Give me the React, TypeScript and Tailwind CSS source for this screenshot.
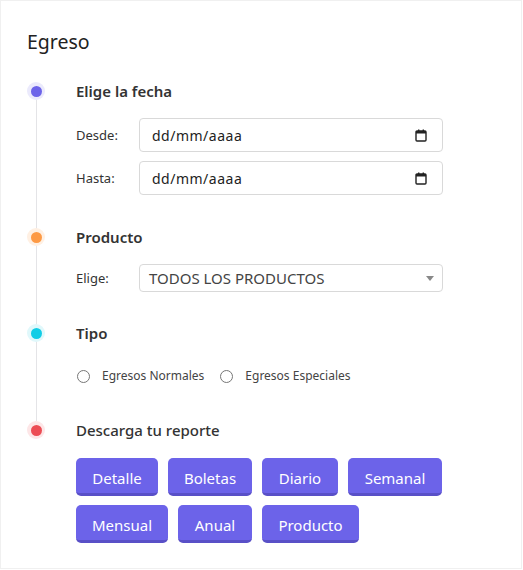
import type { ReactNode } from "react"

const font = { fontFamily: '"Noto Sans", "Open Sans", sans-serif' }

function Dot({ color, halo }: { color: string; halo: string }) {
  return (
    <div className={`mt-px h-[18px] w-[18px] rounded-full grid place-items-center relative z-10 ${halo}`}>
      <span className={`h-[11px] w-[11px] rounded-full ${color}`} />
    </div>
  )
}

function Section({ dot, title, children, className = "", bold = true }: { dot: ReactNode; title: string; children: ReactNode; className?: string; bold?: boolean }) {
  return (
    <div className={`flex ${className}`}>
      <div className="w-[49px] flex-none">{dot}</div>
      <div className="flex-1">
        <div className={`h-5 leading-5 text-[15px] text-[#333] ${bold ? "font-semibold" : "font-medium"}`}>{title}</div>
        {children}
      </div>
    </div>
  )
}

function CalendarIcon() {
  return (
    <svg width="12" height="13" viewBox="0 0 12 13" fill="none">
      <rect x="1" y="2" width="10" height="10" rx="1" stroke="#222" strokeWidth="1.4" />
      <rect x="1" y="2" width="10" height="2.5" fill="#222" />
      <rect x="3" y="0.5" width="1.4" height="2" fill="#222" />
      <rect x="7.6" y="0.5" width="1.4" height="2" fill="#222" />
    </svg>
  )
}

function DateField({ label }: { label: string }) {
  return (
    <div className="flex items-center">
      <div className="w-[63px] text-[13px] text-[#333] pt-[2px]">{label}</div>
      <div className="w-[304px] h-[34px] rounded-[4px] border border-[#d9d9d9] flex items-center justify-between pl-3 pr-[15px]">
        <span className="text-[14px] tracking-[0.5px] text-[#222]">dd/mm/aaaa</span>
        <CalendarIcon />
      </div>
    </div>
  )
}

function Radio({ label }: { label: string }) {
  return (
    <label className="flex items-center">
      <span className="h-[13px] w-[13px] rounded-full border border-[#767676]" />
      <span className="ml-3 text-[12px] text-[#444]">{label}</span>
    </label>
  )
}

function Btn({ children, w }: { children: ReactNode; w: string }) {
  return (
    <button className={`${w} h-[38px] rounded-[5px] bg-[#6c63e9] border-b-[3px] border-[#5950c7] text-white text-[15px] leading-none pt-[5px]`}>
      {children}
    </button>
  )
}

export default function App() {
  return (
    <div style={font} className="w-[522px] h-[569px] bg-white border border-[#f0f0f0] pl-[26px] pt-[27px]">
      <h1 className="text-[19.5px] leading-7 text-[#222]">Egreso</h1>

      <div className="relative mt-[25px]">
        <div className="absolute left-[8.5px] top-[10px] bottom-[122px] w-px bg-[#e4e4e7]" />

        <Section dot={<Dot color="bg-[#6c63e9]" halo="bg-[#ebeafc]" />} title="Elige la fecha">
          <div className="mt-[17px] flex flex-col gap-[9px]">
            <DateField label="Desde:" />
            <DateField label="Hasta:" />
          </div>
        </Section>

        <Section className="mt-[32px]" dot={<Dot color="bg-[#fd9a45]" halo="bg-[#fff0e3]" />} title="Producto">
          <div className="mt-[17px] flex items-center">
            <div className="w-[63px] text-[13px] text-[#333] pt-[2px]">Elige:</div>
            <div className="w-[304px] h-[28px] rounded-[4px] border border-[#d9d9d9] flex items-center justify-between pl-[9px] pr-[8px]">
              <span className="text-[15px] text-[#444]">TODOS LOS PRODUCTOS</span>
              <span className="w-0 h-0 border-l-[4px] border-r-[4px] border-t-[5px] border-l-transparent border-r-transparent border-t-[#888]" />
            </div>
          </div>
        </Section>

        <Section className="mt-[31px]" dot={<Dot color="bg-[#11cde6]" halo="bg-[#e0f8fb]" />} title="Tipo">
          <div className="mt-[23px] h-5 flex items-center gap-[16px] pl-px">
            <Radio label="Egresos Normales" />
            <Radio label="Egresos Especiales" />
          </div>
        </Section>

        <Section className="mt-[34px]" bold={false} dot={<Dot color="bg-[#ec4c54]" halo="bg-[#fde6e7]" />} title="Descarga tu reporte">
          <div className="mt-[18px] flex flex-wrap gap-x-[10px] gap-y-[9px] w-[380px]">
            <Btn w="w-[82px]">Detalle</Btn>
            <Btn w="w-[84px]">Boletas</Btn>
            <Btn w="w-[76px]">Diario</Btn>
            <Btn w="w-[94px]">Semanal</Btn>
            <Btn w="w-[92px]">Mensual</Btn>
            <Btn w="w-[74px]">Anual</Btn>
            <Btn w="w-[97px]">Producto</Btn>
          </div>
        </Section>
      </div>
    </div>
  )
}
